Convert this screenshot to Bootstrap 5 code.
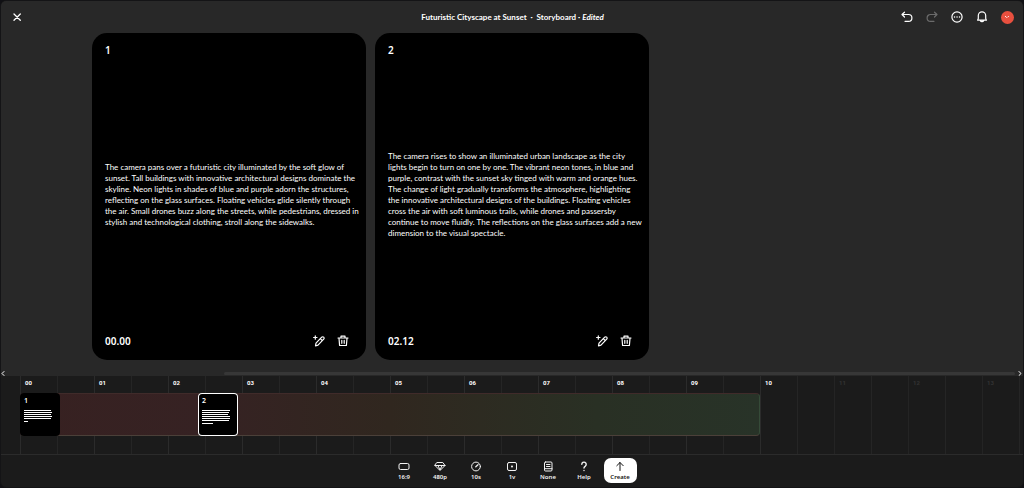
<!DOCTYPE html>
<html lang="en" data-bs-theme="dark">
<head>
<meta charset="utf-8">
<meta name="viewport" content="width=device-width, initial-scale=1">
<title>Futuristic Cityscape at Sunset · Storyboard</title>
<link rel="stylesheet" href="https://cdn.jsdelivr.net/npm/bootstrap@5.3.0/dist/css/bootstrap.min.css">
<style>
  body { background: #101014; color: #fff; font-family: Lato, "Noto Sans", sans-serif; font-size: 8px; line-height: 11px; }
  svg { display: block; fill: none; stroke: currentColor; stroke-linecap: round; stroke-linejoin: round; }
  .editor { background: #1b1b1b; border: 1px solid #141416; border-radius: 6px; }
  .stage { background: #282828; }
  .topbar { height: 32px; padding: 0 9px 0 10px; display: grid; grid-template-columns: 1fr auto 1fr; }
  .topbar h1 { font-size: 8px; line-height: 11px; font-weight: 700; }
  .icon-btn { background: none; border: 0; padding: 0; color: #fff; line-height: 0; }
  .icon-btn:disabled { color: #6b6b6b; }
  .actions { gap: 13px; }
  .avatar { width: 13px; height: 13px; background: #e8503f; }
  .scenes { padding: 0 9px 11px 91px; gap: 9px; }
  .scene { width: 274px; min-height: 326px; background: #000; border-radius: 15px; padding: 10px 13px 12px; }
  .scene h2, .stamp { font-family: "Noto Sans", sans-serif; font-size: 10px; line-height: 14px; font-weight: 600; margin: 0; }
  .scene p { white-space: nowrap; margin: 0; padding-bottom: 2px; }
  .scene-tools { gap: 12px; }
  .scroller { height: 5px; padding-right: 1px; }
  .thumb { height: 3px; background: #373737; border-radius: 2px; margin-left: 219px; margin-right: 3px; }
  .timeline { height: 79px; border-bottom: 1px solid #2b2b2b; padding-left: 19px; }
  .tick { flex: 0 0 74px; height: 100%; border-left: 1px solid #2b2b2b; padding: 1px 0 0 4px; font-family: Roboto, sans-serif; font-size: 6px; line-height: 11px; font-weight: 700;
          background: linear-gradient(#252525, #252525) 36px 0 / 1px 100% no-repeat; }
  .tick.beyond { color: #333; border-color: #242424; }
  .track { left: 19px; top: 17px; width: 740px; height: 43px; border-radius: 4px; border: 1px solid;
           background: linear-gradient(90deg, #372121, #362223 25%, #30271f 50%, #293024 78%, #283328);
           border-color: #402b2a #354b38 #4b4039 #402b2a; }
  .clip { top: -1px; width: 40px; height: 43px; background: #000; border: 0; border-radius: 4px; padding: 3px 4px; color: #fff; font-family: "Noto Sans", sans-serif; font-size: 7px; line-height: 9px; font-weight: 600; }
  .clip svg { margin-top: 5px; stroke-linecap: butt; }
  .clip.chosen { box-shadow: inset 0 0 0 1px #fff; }
  .tools { min-height: 32px; padding-top: 3px; gap: 3px; }
  .tool { width: 33px; height: 25px; padding: 3px 0 1px; border: 0; border-radius: 7px; background: none; color: #f2f2f2; font-family: "Noto Sans", sans-serif; font-size: 6px; line-height: 9px; font-weight: 600; }
  .tool.create { background: #fff; color: #111; }
</style>
</head>
<body class="min-vh-100 d-flex">
<div class="editor flex-fill d-flex flex-column overflow-hidden">
  <main class="stage flex-fill d-flex flex-column">
    <header class="topbar align-items-center">
      <button class="icon-btn text-start" aria-label="Close"><svg width="12" height="12" viewBox="0 0 12 12" stroke-width="1.3"><path d="M3 3l6.300 6.300M9.300 3L3 9.300"/></svg></button>
      <h1 class="m-0">Futuristic Cityscape at Sunset &nbsp;·&nbsp; Storyboard · <em>Edited</em></h1>
      <div class="actions d-flex justify-content-end align-items-center">
        <button class="icon-btn" aria-label="Undo"><svg width="12" height="12" viewBox="0 0 12 12" stroke-width="1.2"><path d="M3.500 1.200L1 3.500l2.500 2.500M1.200 3.500h6.300a3.300 3.300 0 0 1 0 6.800H4"/></svg></button>
        <button class="icon-btn" aria-label="Redo" disabled><svg width="12" height="12" viewBox="0 0 12 12" stroke-width="1.200"><path d="M8.500 1.200L11 3.500 8.500 6M10.800 3.500H4.500a3.300 3.300 0 0 0 0 6.800H8"/></svg></button>
        <button class="icon-btn" aria-label="More"><svg width="12" height="12" viewBox="0 0 12 12" stroke-width="1.200"><circle cx="6" cy="6" r="5.100"/><path d="M3.500 6h.1M6 6h.1M8.500 6h.1" stroke-width="1.400"/></svg></button>
        <button class="icon-btn" aria-label="Notifications"><svg width="12" height="12" viewBox="0 0 12 12" stroke-width="1.200"><path d="M1.600 9.200h8.800L9.700 7.500V4.600a3.700 3.700 0 0 0-7.400 0v2.900zM4.300 9.500a1.800 1.800 0 0 0 3.400 0"/></svg></button>
        <button class="icon-btn avatar rounded-circle" aria-label="Account"><svg width="13" height="13" viewBox="0 0 13 13" stroke-width="1.100"><path d="M4.500 5.500h.1M7.300 5.500h.1M5.800 6.500h.1"/></svg></button>
      </div>
    </header>
    <section class="scenes d-flex flex-fill">
      <article class="scene d-flex flex-column justify-content-between">
        <h2>1</h2>
        <p>The camera pans over a futuristic city illuminated by the soft glow of<br>sunset. Tall buildings with innovative architectural designs dominate the<br>skyline. Neon lights in shades of blue and purple adorn the structures,<br>reflecting on the glass surfaces. Floating vehicles glide silently through<br>the air. Small drones buzz along the streets, while pedestrians, dressed in<br>stylish and technological clothing, stroll along the sidewalks.</p>
        <footer class="d-flex justify-content-between align-items-center"><span class="stamp">00.00</span>
          <span class="scene-tools d-flex"><button class="icon-btn" aria-label="Edit scene 1"><svg width="12" height="12" viewBox="0 0 12 12"><use href="#pencil"/></svg></button><button class="icon-btn me-1" aria-label="Delete scene 1"><svg width="12" height="12" viewBox="0 0 12 12"><use href="#bin"/></svg></button></span></footer>
      </article>
      <article class="scene d-flex flex-column justify-content-between">
        <h2>2</h2>
        <p>The camera rises to show an illuminated urban landscape as the city<br>lights begin to turn on one by one. The vibrant neon tones, in blue and<br>purple, contrast with the sunset sky tinged with warm and orange hues.<br>The change of light gradually transforms the atmosphere, highlighting<br>the innovative architectural designs of the buildings. Floating vehicles<br>cross the air with soft luminous trails, while drones and passersby<br>continue to move fluidly. The reflections on the glass surfaces add a new<br>dimension to the visual spectacle.</p>
        <footer class="d-flex justify-content-between align-items-center"><span class="stamp">02.12</span>
          <span class="scene-tools d-flex"><button class="icon-btn" aria-label="Edit scene 2"><svg width="12" height="12" viewBox="0 0 12 12"><use href="#pencil"/></svg></button><button class="icon-btn me-1" aria-label="Delete scene 2"><svg width="12" height="12" viewBox="0 0 12 12"><use href="#bin"/></svg></button></span></footer>
      </article>
    </section>
    <div class="scroller d-flex align-items-center">
      <svg width="4" height="5" viewBox="0 0 4 5" stroke="#888"><path d="M3 .5l-2 2 2 2"/></svg>
      <div class="thumb flex-fill"></div>
      <svg width="4" height="5" viewBox="0 0 4 5" stroke="#ddd"><path d="M1 .5l2 2-2 2"/></svg>
    </div>
  </main>
  <section class="timeline position-relative d-flex overflow-hidden" aria-label="Timeline">
    <div class="tick">00</div><div class="tick">01</div><div class="tick">02</div><div class="tick">03</div><div class="tick">04</div><div class="tick">05</div><div class="tick">06</div><div class="tick">07</div><div class="tick">08</div><div class="tick">09</div><div class="tick">10</div><div class="tick beyond">11</div><div class="tick beyond">12</div><div class="tick beyond">13</div>
    <div class="track position-absolute">
      <button class="clip position-absolute d-flex flex-column align-items-start" style="left:-1px">1<svg width="29" height="15" viewBox="0 0 29 15"><path d="M0 .5h27M0 2.500h28M0 4.500h27M0 6.500h28M0 8.500h27M0 11.500h4"/></svg></button>
      <button class="clip chosen position-absolute d-flex flex-column align-items-start" style="left:177px">2<svg width="29" height="15" viewBox="0 0 29 15"><path d="M0 .5h28M0 2.500h27M0 4.500h26M0 6.500h28M0 8.500h28M0 10.500h27M0 13.500h11"/></svg></button>
    </div>
  </section>
  <nav class="tools d-flex justify-content-center" aria-label="Video settings">
    <button class="tool d-flex flex-column align-items-center justify-content-between"><svg width="12" height="11" viewBox="0 0 12 11"><rect x="1" y="2.500" width="10" height="6" rx="1.500"/></svg>16:9</button>
    <button class="tool d-flex flex-column align-items-center justify-content-between"><svg width="12" height="11" viewBox="0 0 12 11"><path d="M3.200 1.500h5.600L11 4.500l-5 5-5-5zM1 4.500h10M4 4.500l2 4.500 2-4.500"/></svg>480p</button>
    <button class="tool d-flex flex-column align-items-center justify-content-between"><svg width="12" height="11" viewBox="0 0 12 11"><circle cx="6" cy="5.500" r="4.400"/><path d="M5.800 5.700L8 3.700" stroke-width="1.300"/></svg>10s</button>
    <button class="tool d-flex flex-column align-items-center justify-content-between"><svg width="12" height="11" viewBox="0 0 12 11"><rect x="1.500" y="1.500" width="9" height="8" rx="1.500"/><path d="M5.900 5.500h.2" stroke-width="1.800"/></svg>1v</button>
    <button class="tool d-flex flex-column align-items-center justify-content-between"><svg width="12" height="11" viewBox="0 0 12 11"><rect x="2.500" y="1" width="7.500" height="9" rx="1"/><path d="M4.500 3.500h3.500M4.500 5.500h3.500M2.500 7.700h7.500"/></svg>None</button>
    <button class="tool d-flex flex-column align-items-center justify-content-between"><svg width="12" height="11" viewBox="0 0 12 11" stroke-width="1.400"><path d="M3.800 3.300a2.200 2.200 0 1 1 3.500 1.800C6.400 5.700 6 6 6 7M6 9.500v.1"/></svg>Help</button>
    <button class="tool create d-flex flex-column align-items-center justify-content-between"><svg width="12" height="11" viewBox="0 0 12 11"><path d="M6 9.500V1.500M2.800 4.700L6 1.500l3.200 3.200"/></svg>Create</button>
  </nav>
</div>
<svg class="position-absolute" width="0" height="0" aria-hidden="true"><defs>
  <g id="pencil" stroke-width="1.200"><path d="M2.500 10.800l.5-2.600 5.700-6a1.400 1.400 0 0 1 2 2L5 10.100zM7.300 3.700l2 2"/><path d="M2.300.8v3.400M.6 2.500H4"/></g>
  <g id="bin" stroke-width="1.200"><path d="M1 3h10M4 2.800V1.200h4v1.600M2 3.200l.6 7.300h6.800l.6-7.300M4.800 5.300v3M7.200 5.300v3"/></g>
</defs></svg>
<script src="https://cdn.jsdelivr.net/npm/bootstrap@5.3.0/dist/js/bootstrap.bundle.min.js"></script>
</body>
</html>
